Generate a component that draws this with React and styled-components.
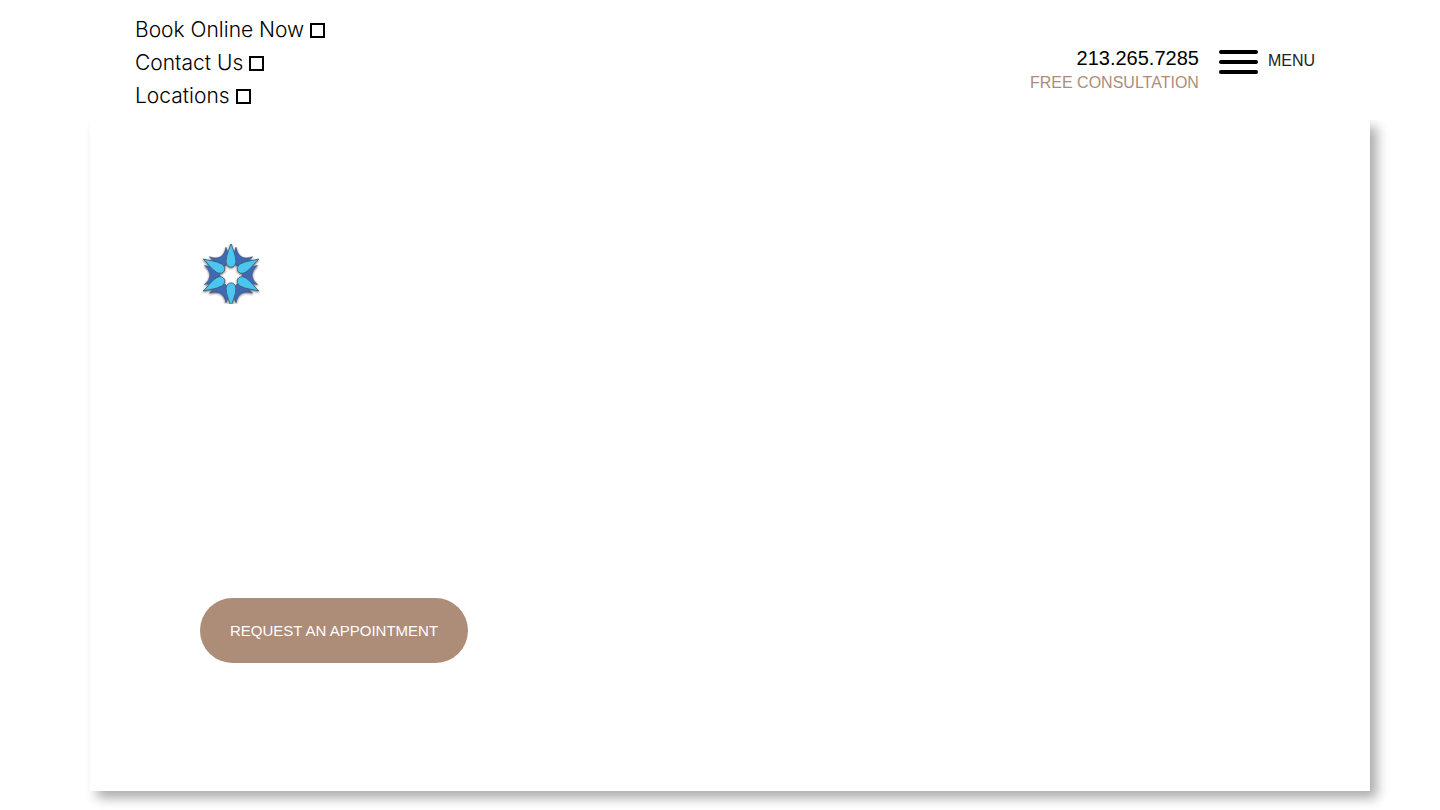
import React from 'react';
import styled, { createGlobalStyle } from 'styled-components';

const GlobalStyle = createGlobalStyle`
  * {
    box-sizing: border-box;
  }

  body {
    margin: 0;
    background: #fff;
    color: #000;
    font-family: 'Liberation Sans', Arial, sans-serif;
  }
`;

const Page = styled.div`
  display: flex;
  flex-direction: column;
  min-height: 100vh;
  padding-bottom: 19px;
  overflow: hidden;
`;

const Header = styled.header`
  position: relative;
  z-index: 1;
  display: flex;
  align-items: center;
  justify-content: space-between;
  height: 120px;
  padding: 4px 125px 0 135px;
  background: #fff;
`;

const QuickLinks = styled.nav`
  display: flex;
  flex-direction: column;
  align-items: flex-start;
`;

const QuickLink = styled.a`
  display: flex;
  align-items: center;
  gap: 6px;
  color: #000;
  font-family: Inter, 'Liberation Sans', sans-serif;
  font-size: 21px;
  font-weight: 300;
  line-height: 33px;
  text-decoration: none;
`;

const Box = styled.span`
  width: 15px;
  height: 15px;
  margin-top: 2px;
  border: 2px solid #000;
`;

const HeaderRight = styled.div`
  display: flex;
  align-items: center;
  gap: 20px;
  padding-top: 16px;
`;

const Contact = styled.div`
  display: flex;
  flex-direction: column;
  gap: 1px;
  text-align: right;
  line-height: 24px;
`;

const Phone = styled.a`
  color: #000;
  font-size: 20px;
  text-decoration: none;
`;

const Consultation = styled.a`
  color: #ad8c78;
  font-size: 16px;
  text-decoration: none;
`;

const MenuButton = styled.button`
  display: flex;
  align-items: center;
  gap: 10px;
  margin-bottom: 19px;
  padding: 0;
  border: 0;
  background: none;
  color: #222;
  font-family: inherit;
  font-size: 16px;
  line-height: 24px;
  cursor: pointer;
`;

const Bars = styled.span`
  display: flex;
  flex-direction: column;
  gap: 6px;
  width: 39px;
  margin-top: 2px;
`;

const Bar = styled.span`
  height: 4px;
  border-radius: 2px;
  background: #000;
`;

const Hero = styled.main`
  display: flex;
  flex: 1;
  flex-direction: column;
  align-items: flex-start;
  justify-content: space-between;
  margin: 0 70px 0 90px;
  padding: 124px 110px 128px;
  background: #fff;
  box-shadow: 7px 7px 11px rgba(0, 0, 0, 0.33);
`;

const LogoMark = styled.svg`
  display: block;
  width: 60px;
  height: 60px;
`;

const RequestButton = styled.button`
  height: 65px;
  padding: 0 30px;
  border: 0;
  border-radius: 35px;
  background: #ad8c78;
  color: #fff;
  font-family: inherit;
  font-size: 15px;
  cursor: pointer;
`;

const links = [
  { label: 'Book Online Now', href: '#book' },
  { label: 'Contact Us', href: '#contact' },
  { label: 'Locations', href: '#locations' },
];

const angles = [0, 60, 120, 180, 240, 300];

const Logo = () => (
  <LogoMark viewBox="0 0 60 60" role="img" aria-label="Star logo">
    <defs>
      <filter id="soft" x="-20%" y="-20%" width="140%" height="140%">
        <feDropShadow dx="0" dy="1" stdDeviation="1" floodColor="#222" floodOpacity="0.7" />
      </filter>
    </defs>
    <g filter="url(#soft)">
      {angles.map((a) => (
        <path
          key={a}
          d="M21.5 4.5 Q26 10 31 10 Q36 10 40.5 4.5 L38 16 L31 20 L24 16 Z"
          transform={`rotate(${a + 30} 31 31)`}
          fill="#4169b4"
          stroke="#34507f"
          strokeWidth="0.6"
        />
      ))}
      {angles.map((a) => (
        <path
          key={a}
          d="M31 -1 C32 4 36 11 35.9 17.5 C35.5 25 26.5 25 26.1 17.5 C26 11 30 4 31 -1 Z"
          transform={`rotate(${a} 31 31)`}
          fill="#4cc6f0"
          stroke="#3d5c70"
          strokeWidth="0.8"
        />
      ))}
    </g>
  </LogoMark>
);

const App = () => {
  return (
    <Page>
      <GlobalStyle />
      <Header>
        <QuickLinks>
          {links.map((link) => (
            <QuickLink key={link.label} href={link.href}>
              {link.label}
              <Box />
            </QuickLink>
          ))}
        </QuickLinks>
        <HeaderRight>
          <Contact>
            <Phone href="tel:2132657285">213.265.7285</Phone>
            <Consultation href="#consultation">FREE CONSULTATION</Consultation>
          </Contact>
          <MenuButton type="button">
            <Bars>
              <Bar />
              <Bar />
              <Bar />
            </Bars>
            MENU
          </MenuButton>
        </HeaderRight>
      </Header>
      <Hero>
        <Logo />
        <RequestButton type="button">REQUEST AN APPOINTMENT</RequestButton>
      </Hero>
    </Page>
  );
};

export default App;
